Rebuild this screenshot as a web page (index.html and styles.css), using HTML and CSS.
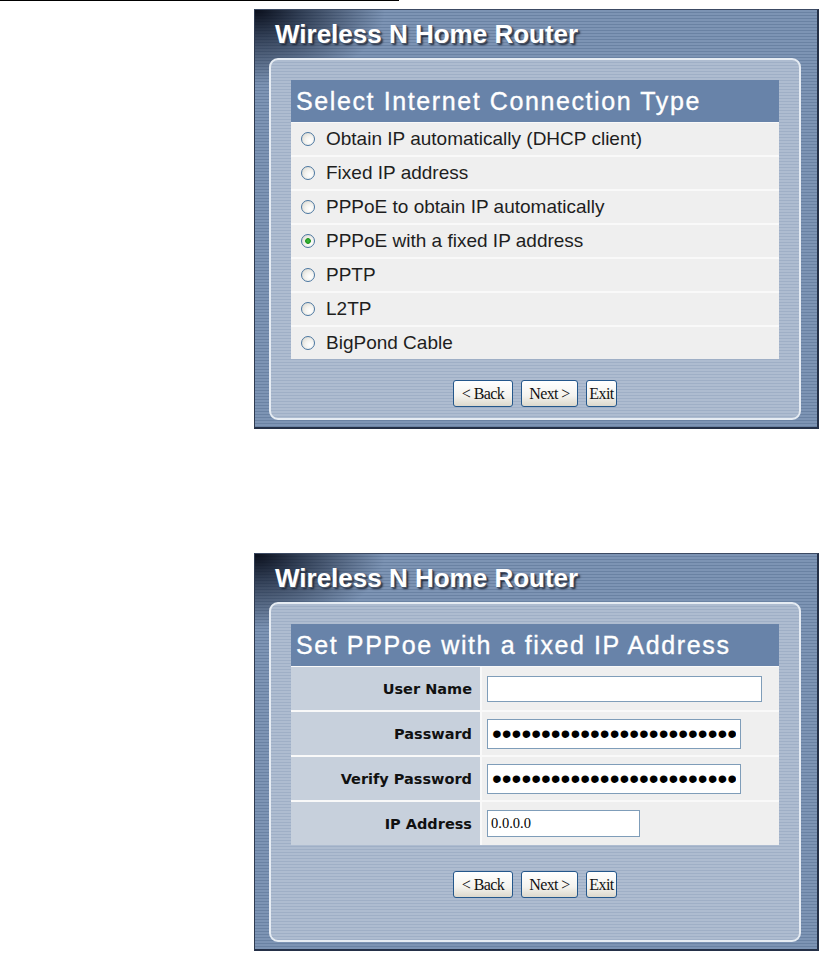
FILE: index.html
```html
<!DOCTYPE html>
<html>
  <head>
    <meta charset="UTF-8">
    <title>Wireless N Home Router</title>
    <link rel="stylesheet" href="styles.css">
  </head>
  <body>
    <div class="top-rule"></div>
    <div class="page">
      <!-- step 1: connection type -->
      <div class="router-panel">
        <div class="router-head">Wireless N Home Router</div>
        <div class="router-body">
          <div class="box-title">Select Internet Connection Type</div>
          <div class="choice-list">
            <label class="choice"><input type="radio" name="wan"><span>Obtain IP automatically (DHCP client)</span></label>
            <label class="choice"><input type="radio" name="wan"><span>Fixed IP address</span></label>
            <label class="choice"><input type="radio" name="wan"><span>PPPoE to obtain IP automatically</span></label>
            <label class="choice"><input type="radio" name="wan" checked><span>PPPoE with a fixed IP address</span></label>
            <label class="choice"><input type="radio" name="wan"><span>PPTP</span></label>
            <label class="choice"><input type="radio" name="wan"><span>L2TP</span></label>
            <label class="choice"><input type="radio" name="wan"><span>BigPond Cable</span></label>
          </div>
          <div class="btn-row">
            <button class="wiz-btn btn-back">&lt; Back</button>
            <button class="wiz-btn btn-next">Next &gt;</button>
            <button class="wiz-btn btn-exit">Exit</button>
          </div>
        </div>
      </div>

      <!-- step 2: PPPoE settings -->
      <div class="router-panel second">
        <div class="router-head">Wireless N Home Router</div>
        <div class="router-body">
          <div class="box-title">Set PPPoe with a fixed IP Address</div>
          <div class="field-grid">
            <div class="field-label">User Name</div>
            <div class="field-value"><input type="text" class="txt txt-user"></div>
            <div class="field-label">Passward</div>
            <div class="field-value"><input type="password" class="txt txt-pass" value="1234567890123456789012345"></div>
            <div class="field-label">Verify Password</div>
            <div class="field-value"><input type="password" class="txt txt-pass" value="1234567890123456789012345"></div>
            <div class="field-label">IP Address</div>
            <div class="field-value"><input type="text" class="txt txt-ip" value="0.0.0.0"></div>
          </div>
          <div class="btn-row btn-row-form">
            <button class="wiz-btn btn-back">&lt; Back</button>
            <button class="wiz-btn btn-next">Next &gt;</button>
            <button class="wiz-btn btn-exit">Exit</button>
          </div>
        </div>
      </div>
    </div>
  </body>
</html>
```

FILE: styles.css
```css
/* base */
html,body{margin:0;padding:0;background:#fff;font-family:"Liberation Sans",Arial,sans-serif;color:#1e1e1e;}
.top-rule{width:399px;height:1px;background:#000;}
.page{padding:8px 0 0 254px;}

/* outer router frame */
.router-panel{width:565px;height:420px;box-sizing:border-box;display:flex;flex-direction:column;
  border-top:1px solid #3c4a63;border-left:1px solid #2e3a50;border-right:2px solid #243047;border-bottom:2px solid #243047;
  background:
    radial-gradient(ellipse 130px 75px at 0 0,rgba(4,8,20,.95) 0%,rgba(10,18,35,.65) 35%,rgba(40,55,80,0) 100%),
    repeating-linear-gradient(to bottom,#7d94b4 0,#7d94b4 2px,#6a82a3 2px,#6a82a3 3px);}
.router-panel.second{height:398px;margin-top:124px;}
.router-head{height:48px;box-sizing:border-box;padding:9px 0 0 20px;font-weight:bold;font-size:26px;line-height:30px;color:#fff;
  text-shadow:1px 1px 0 #4a5568,2px 2px 2px #1a2233;white-space:nowrap;}
.router-body{flex:1;margin:0 16px 7px 14px;border:2px solid #e6ecf3;border-radius:9px;padding:20px 20px 0 20px;
  background:repeating-linear-gradient(to bottom,#aebcd0 0,#aebcd0 2px,#9fafc6 2px,#9fafc6 3px);}

/* section title bar */
.box-title{height:42px;line-height:42px;padding-left:5px;background:#6883a9;color:#fff;font-size:25px;letter-spacing:1.6px;
  -webkit-text-stroke:.35px #fff;white-space:nowrap;overflow:hidden;}

/* radio list */
.choice-list{display:grid;grid-auto-rows:32px;row-gap:2px;padding-top:1px;background:#f9f9f9;}
.choice{display:flex;align-items:center;background:#efefef;font-size:19px;white-space:nowrap;}
.choice input{-webkit-appearance:none;appearance:none;box-sizing:border-box;width:14px;height:14px;margin:0 11px 0 10px;
  border:1px solid #4a76a0;border-radius:50%;background:radial-gradient(circle at 65% 65%,#ffffff 0,#f4f3ef 40%,#d5d3ca 100%);}
.choice input:checked{background:radial-gradient(circle,#3fbf3f 0,#21961f 2.5px,transparent 3.2px),radial-gradient(circle at 65% 65%,#ffffff 0,#f4f3ef 40%,#d5d3ca 100%);}

/* wizard buttons */
.btn-row{display:flex;justify-content:center;gap:8px;margin-top:21px;}
.btn-row-form{margin-top:26px;}
.wiz-btn{height:27px;padding:0;border:1px solid #24578b;border-radius:3px;background:linear-gradient(#ffffff,#f4f3ee 60%,#dcd8cc);
  font-family:"Liberation Serif","Times New Roman",serif;font-size:16px;color:#111;letter-spacing:-.6px;white-space:nowrap;}
.btn-back{width:60px;}
.btn-next{width:57px;}
.btn-exit{width:31px;}

/* form grid */
.field-grid{display:grid;grid-template-columns:189px 1fr;grid-auto-rows:43px;gap:2px;padding-top:1px;background:#f9f9f9;}
.field-label{display:flex;align-items:center;justify-content:flex-end;padding-right:8px;background:#c7d0dc;
  font-family:"DejaVu Sans",Verdana,sans-serif;font-weight:bold;font-size:14.5px;color:#111;}
.field-value{display:flex;align-items:center;padding-left:5px;background:#efefef;}
.txt{box-sizing:border-box;margin:0;padding:0 3px;border:1px solid #7f9db9;background:#fff;color:#000;}
.txt-user{width:275px;height:26px;}
.txt-pass{width:254px;height:30px;padding:0 4px;font-family:"Liberation Sans",Arial,sans-serif;font-size:28px;}
.txt-ip{width:153px;height:27px;font-family:"Liberation Serif","Times New Roman",serif;font-size:14.5px;}
```
